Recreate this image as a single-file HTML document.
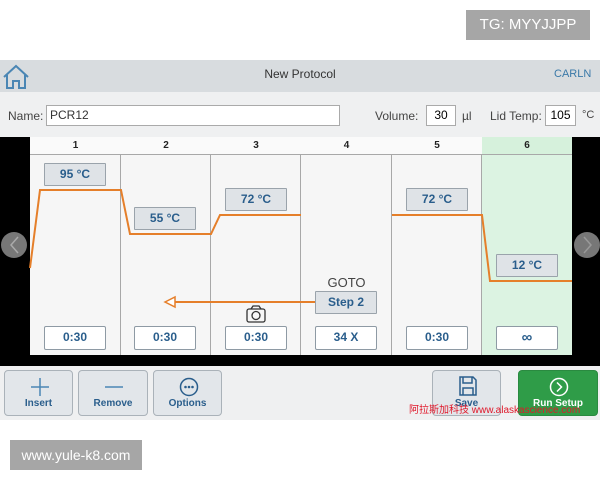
<!DOCTYPE html>
<html><head><style>
*{margin:0;padding:0;box-sizing:border-box}
body{width:600px;height:480px;background:#fff;position:relative;overflow:hidden;font-family:"Liberation Sans","Noto Sans CJK SC",sans-serif}
.a{position:absolute}
.tb{background:#dfe3e7;border:1px solid #9aa3ab;color:#2a5e8c;font-weight:bold;font-size:12px;text-align:center;line-height:21px;border-radius:1px}
.tm{background:#fff;border:1px solid #8e9aa4;color:#2a5e8c;font-weight:bold;font-size:12px;text-align:center;line-height:21px;border-radius:2px}
.col{position:absolute;top:137px;height:218px;border-right:1px solid #a8a8a8;background:#f6f6f6}
.hd{position:absolute;top:137px;height:18px;line-height:17px;font-size:10px;font-weight:bold;text-align:center;border-bottom:1px solid #a8a8a8;color:#222}
.btn{position:absolute;top:370px;height:46px;background:#e2e6ea;border:1px solid #aab2b9;border-radius:4px;color:#2a5e8c;font-size:10px;font-weight:bold;text-align:center}
.btn span{position:absolute;left:0;right:0;bottom:6px}
</style></head><body>
<div class="a" style="left:466px;top:10px;width:124px;height:30px;background:#a6a6a6;color:#fff;font-size:15px;line-height:30px;text-align:center">TG: MYYJJPP</div>

<div class="a" style="left:0;top:60px;width:600px;height:32px;background:#d8dcdf"></div>
<svg class="a" style="left:2px;top:64px" width="28" height="26" viewBox="0 0 28 26"><path d="M2 13 L14 2 L26 13 M5 11 V24 H11 V17 H17 V24 H23 V11" fill="none" stroke="#4a86b4" stroke-width="2"/></svg>
<div class="a" style="left:0;top:67px;width:600px;text-align:center;font-size:12px;color:#333">New Protocol</div>
<div class="a" style="left:554px;top:68px;font-size:11px;color:#3a79a8">CARLN</div>

<div class="a" style="left:0;top:92px;width:600px;height:45px;background:#eff0f1"></div>
<div class="a" style="left:8px;top:109px;font-size:12px;color:#444">Name:</div>
<div class="a" style="left:46px;top:105px;width:294px;height:21px;background:#fff;border:1px solid #aaa;font-size:12px;line-height:19px;padding-left:3px;color:#333">PCR12</div>
<div class="a" style="left:375px;top:109px;font-size:12px;color:#444">Volume:</div>
<div class="a" style="left:426px;top:105px;width:30px;height:21px;background:#fff;border:1px solid #aaa;font-size:12px;line-height:19px;text-align:center">30</div>
<div class="a" style="left:462px;top:109px;font-size:12px;color:#444">µl</div>
<div class="a" style="left:490px;top:109px;font-size:12px;color:#444">Lid Temp:</div>
<div class="a" style="left:545px;top:105px;width:31px;height:21px;background:#fff;border:1px solid #aaa;font-size:12px;line-height:19px;text-align:center">105</div>
<div class="a" style="left:582px;top:109px;font-size:11px;color:#444">°C</div>

<div class="a" style="left:0;top:137px;width:600px;height:229px;background:#000"></div>
<div class="col" style="left:30px;width:91px"></div>
<div class="col" style="left:121px;width:90px"></div>
<div class="col" style="left:211px;width:90px"></div>
<div class="col" style="left:301px;width:91px"></div>
<div class="col" style="left:392px;width:90px"></div>
<div class="col" style="left:482px;width:90px;background:#dcf3e2;border-right:none"></div>
<div class="hd" style="left:30px;width:91px;background:#fafafa">1</div>
<div class="hd" style="left:121px;width:90px;background:#fafafa">2</div>
<div class="hd" style="left:211px;width:90px;background:#fafafa">3</div>
<div class="hd" style="left:301px;width:91px;background:#fafafa">4</div>
<div class="hd" style="left:392px;width:90px;background:#fafafa">5</div>
<div class="hd" style="left:482px;width:90px;background:#d6f1dc">6</div>

<svg class="a" style="left:0;top:0" width="600" height="480">
<polyline points="30,268 40,190 121,190 130,234 211,234 220,215 301,215" fill="none" stroke="#e57f2a" stroke-width="2"/>
<polyline points="392,215 482,215 490,281 572,281" fill="none" stroke="#e57f2a" stroke-width="2"/>
<line x1="172" y1="302" x2="316" y2="302" stroke="#e57f2a" stroke-width="2"/>
<polygon points="165,302 175,297 175,307" fill="#fff" stroke="#e57f2a" stroke-width="1.5"/>
<circle cx="14" cy="245" r="13" fill="#777"/><path d="M18 237 L11 245 L18 253" fill="none" stroke="#aaa" stroke-width="1.5"/>
<circle cx="587" cy="245" r="13" fill="#777"/><path d="M584 237 L591 245 L584 253" fill="none" stroke="#999" stroke-width="1.5"/>
<g fill="none" stroke="#333" stroke-width="1.3"><rect x="247" y="309" width="18" height="13" rx="2"/><path d="M251 309 L253 306 H259 L261 309"/><circle cx="256" cy="315.5" r="4"/></g>
</svg>

<div class="a tb" style="left:44px;top:163px;width:62px;height:23px">95 °C</div>
<div class="a tb" style="left:134px;top:207px;width:62px;height:23px">55 °C</div>
<div class="a tb" style="left:225px;top:188px;width:62px;height:23px">72 °C</div>
<div class="a tb" style="left:406px;top:188px;width:62px;height:23px">72 °C</div>
<div class="a tb" style="left:496px;top:254px;width:62px;height:23px">12 °C</div>
<div class="a" style="left:301px;top:275px;width:91px;text-align:center;font-size:13px;color:#444">GOTO</div>
<div class="a tb" style="left:315px;top:291px;width:62px;height:23px">Step 2</div>
<div class="a tm" style="left:44px;top:326px;width:62px;height:24px">0:30</div>
<div class="a tm" style="left:134px;top:326px;width:62px;height:24px">0:30</div>
<div class="a tm" style="left:225px;top:326px;width:62px;height:24px">0:30</div>
<div class="a tm" style="left:315px;top:326px;width:62px;height:24px">34 X</div>
<div class="a tm" style="left:406px;top:326px;width:62px;height:24px">0:30</div>
<div class="a tm" style="left:496px;top:326px;width:62px;height:24px;font-size:15px">∞</div>

<div class="a" style="left:0;top:366px;width:600px;height:54px;background:#eff0f1"></div>
<div class="btn" style="left:4px;width:69px"><svg class="a" style="left:25px;top:6px" width="20" height="20"><path d="M10 1V19M1 10H19" stroke="#4a86b4" stroke-width="1.5"/></svg><span>Insert</span></div>
<div class="btn" style="left:78px;width:70px"><svg class="a" style="left:25px;top:6px" width="20" height="20"><path d="M1 10H19" stroke="#4a86b4" stroke-width="1.5"/></svg><span>Remove</span></div>
<div class="btn" style="left:153px;width:69px"><svg class="a" style="left:25px;top:6px" width="20" height="20"><circle cx="10" cy="10" r="8.5" fill="none" stroke="#2a5e8c" stroke-width="1.5"/><circle cx="6.5" cy="10" r="1.3" fill="#2a5e8c"/><circle cx="10" cy="10" r="1.3" fill="#2a5e8c"/><circle cx="13.5" cy="10" r="1.3" fill="#2a5e8c"/></svg><span>Options</span></div>
<div class="btn" style="left:432px;width:69px"><svg class="a" style="left:26px;top:5px" width="18" height="20"><path d="M1 1H14L17 4V19H1Z M4 1V7H13V1 M4 19V12H14V19" fill="none" stroke="#2a5e8c" stroke-width="1.5"/></svg><span>Save</span></div>
<div class="btn" style="left:518px;width:80px;background:#2f9c48;border-color:#2a8a40;color:#fff"><svg class="a" style="left:30px;top:6px" width="20" height="20"><circle cx="10" cy="10" r="8.5" fill="none" stroke="#fff" stroke-width="1.5"/><path d="M8 5.5L12.5 10L8 14.5" fill="none" stroke="#fff" stroke-width="1.5"/></svg><span>Run Setup</span></div>
<div class="a" style="left:409px;top:401px;font-size:10px;color:#e0182a;white-space:nowrap">阿拉斯加科技 www.alaskascience.com</div>

<div class="a" style="left:10px;top:440px;width:132px;height:30px;background:#a6a6a6;color:#fff;font-size:14px;line-height:30px;text-align:center">www.yule-k8.com</div>
</body></html>
